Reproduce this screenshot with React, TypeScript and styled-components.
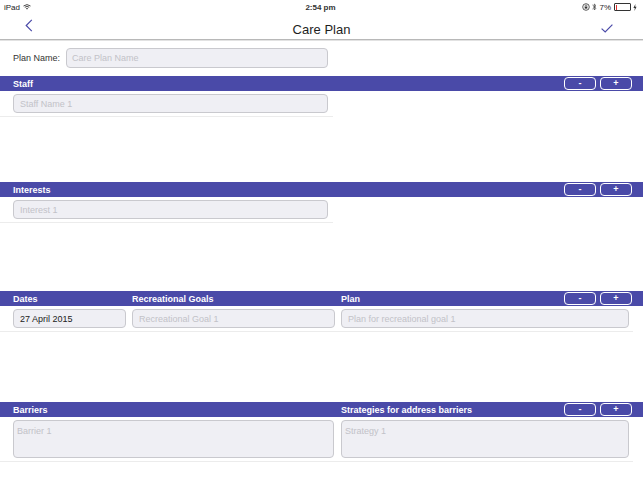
import React from 'react';
import styled, { createGlobalStyle } from 'styled-components';

const purple = '#4a4aa8';

const GlobalStyle = createGlobalStyle`
  html, body {
    margin: 0;
    padding: 0;
    background: #ffffff;
  }
  body {
    font-family: "Liberation Sans", Arial, sans-serif;
    color: #222;
  }
`;

type Column = { label: string; placeholder?: string; value?: string };

type SectionProps = {
  columns: Column[];
  template: string;
  gap: number;
  rowWidth: number;
  height: number;
  multiline?: boolean;
};

const Section = ({ columns, template, gap, rowWidth, height, multiline }: SectionProps) => {
  return (
    <SectionWrap $height={height}>
      <Header>
        <HeaderGrid $template={template} $gap={gap}>
          {columns.map((c) => (
            <HeaderLabel key={c.label}>{c.label}</HeaderLabel>
          ))}
        </HeaderGrid>
        <Buttons>
          <RoundButton>-</RoundButton>
          <RoundButton>+</RoundButton>
        </Buttons>
      </Header>
      <Row $template={template} $gap={gap} $width={rowWidth}>
        {columns.map((c) => (
          <Field key={c.label} $filled={!!c.value} $multiline={multiline}>
            {c.value ?? c.placeholder}
          </Field>
        ))}
      </Row>
    </SectionWrap>
  );
};

const App = () => {
  return (
    <>
      <GlobalStyle />
      <Page>
        <StatusBar>
          <StatusLeft>
            iPad
            <svg width="8" height="6" viewBox="0 0 8 6">
              <path d="M0.5 2 Q4 -0.8 7.5 2" stroke="#333" strokeWidth="0.9" fill="none" />
              <path d="M1.8 3.3 Q4 1.5 6.2 3.3" stroke="#333" strokeWidth="0.9" fill="none" />
              <path d="M4 5.6 L2.9 4.4 Q4 3.5 5.1 4.4 Z" fill="#333" />
            </svg>
          </StatusLeft>
          <Time>2:54 pm</Time>
          <StatusRight>
            <svg width="8" height="8" viewBox="0 0 8 8">
              <circle cx="4" cy="4" r="3.3" stroke="#333" strokeWidth="0.8" fill="none" />
              <rect x="2.7" y="3.6" width="2.6" height="2" fill="#333" />
              <path d="M3.1 3.6 V2.9 A0.9 0.9 0 0 1 4.9 2.9 V3.6" stroke="#333" strokeWidth="0.6" fill="none" />
            </svg>
            <svg width="5" height="8" viewBox="0 0 5 8">
              <path d="M0.5 2 L4 5.3 L2.3 7 V1 L4 2.7 L0.5 6" stroke="#333" strokeWidth="0.7" fill="none" />
            </svg>
            <span>7%</span>
            <Battery>
              <BatteryFill />
            </Battery>
            <svg width="4" height="7" viewBox="0 0 4 7">
              <path d="M2.4 0 L0.4 4 H1.8 L1.4 7 L3.6 2.8 H2.2 Z" fill="#333" />
            </svg>
          </StatusRight>
        </StatusBar>
        <NavBar>
          <NavButton>
            <svg width="8" height="13" viewBox="0 0 8 13">
              <path d="M6.8 0.8 L1.2 6.5 L6.8 12.2" stroke={purple} strokeWidth="1.2" fill="none" />
            </svg>
          </NavButton>
          <Title>Care Plan</Title>
          <NavButton $right>
            <svg width="12" height="9" viewBox="0 0 12 9">
              <path d="M0.6 4.6 L4.2 8 L11.4 0.6" stroke={purple} strokeWidth="1.2" fill="none" />
            </svg>
          </NavButton>
        </NavBar>
        <PlanRow>
          <PlanLabel>Plan Name:</PlanLabel>
          <PlanInput>Care Plan Name</PlanInput>
        </PlanRow>
        <Section
          columns={[{ label: 'Staff', placeholder: 'Staff Name 1' }]}
          template="315px"
          gap={0}
          rowWidth={333}
          height={106}
        />
        <Section
          columns={[{ label: 'Interests', placeholder: 'Interest 1' }]}
          template="315px"
          gap={0}
          rowWidth={333}
          height={109}
        />
        <Section
          columns={[
            { label: 'Dates', value: '27 April 2015' },
            { label: 'Recreational Goals', placeholder: 'Recreational Goal 1' },
            { label: 'Plan', placeholder: 'Plan for recreational goal 1' },
          ]}
          template="113px 203px 1fr"
          gap={6}
          rowWidth={633}
          height={111}
        />
        <Section
          columns={[
            { label: 'Barriers', placeholder: 'Barrier 1' },
            { label: 'Strategies for address barriers', placeholder: 'Strategy 1' },
          ]}
          template="321px 1fr"
          gap={7}
          rowWidth={633}
          height={80}
          multiline
        />
      </Page>
    </>
  );
};

const Page = styled.div`
  width: 643px;
  height: 482px;
  overflow: hidden;
  display: flex;
  flex-direction: column;
`;

const StatusBar = styled.div`
  height: 14px;
  display: grid;
  grid-template-columns: 1fr auto 1fr;
  align-items: center;
  padding: 0 6px 0 4px;
  font-size: 8px;
  color: #222;
`;

const StatusLeft = styled.div`
  display: flex;
  align-items: center;
  gap: 3px;
`;

const Time = styled.div`
  font-size: 8px;
  font-weight: bold;
  color: #333;
`;

const StatusRight = styled.div`
  display: flex;
  align-items: center;
  justify-content: flex-end;
  gap: 2px;
`;

const Battery = styled.div`
  width: 14px;
  height: 5px;
  border: 0.8px solid #333;
  border-radius: 1px;
  margin-left: 1px;
  display: flex;
  padding: 0.5px;
`;

const BatteryFill = styled.div`
  width: 1.5px;
  background: #e03030;
`;

const NavBar = styled.div`
  height: 25px;
  display: grid;
  grid-template-columns: 60px 1fr 60px;
  align-items: center;
  border-bottom: 1px solid #b8b8b8;
  box-shadow: 0 1px 0 #e2e2e2;
`;

const NavButton = styled.div<{ $right?: boolean }>`
  display: flex;
  justify-content: ${(p) => (p.$right ? 'flex-end' : 'flex-start')};
  padding: ${(p) => (p.$right ? '4px 30px 0 0' : '0 0 0 25px')};
  margin-top: ${(p) => (p.$right ? '0' : '-3px')};
`;

const Title = styled.div`
  text-align: center;
  font-size: 13px;
  color: #1e1e1e;
  padding-top: 5px;
`;

const PlanRow = styled.div`
  height: 36px;
  display: flex;
  align-items: center;
  padding: 0 0 0 13px;
  gap: 8px;
`;

const PlanLabel = styled.div`
  font-size: 9px;
  color: #333;
  white-space: nowrap;
  width: 45px;
`;

const PlanInput = styled.div`
  width: 250px;
  height: 18px;
  border: 1px solid #c9c9ce;
  border-radius: 4px;
  background: #efeff4;
  color: #c2c2c8;
  font-size: 9px;
  padding: 0 5px;
  display: flex;
  align-items: center;
`;

const SectionWrap = styled.div<{ $height: number }>`
  height: ${(p) => p.$height}px;
  flex-shrink: 0;
`;

const Header = styled.div`
  height: 15px;
  background: ${purple};
  display: flex;
  align-items: center;
  padding-left: 13px;
`;

const HeaderGrid = styled.div<{ $template: string; $gap: number }>`
  flex: 1;
  display: grid;
  grid-template-columns: ${(p) => p.$template};
  column-gap: ${(p) => p.$gap}px;
`;

const HeaderLabel = styled.div`
  color: #ffffff;
  font-size: 9px;
  font-weight: bold;
  white-space: nowrap;
`;

const Buttons = styled.div`
  display: flex;
  gap: 4px;
  margin-right: 11px;
`;

const RoundButton = styled.div`
  width: 30px;
  height: 11px;
  border: 1px solid #ffffff;
  border-radius: 4px;
  color: #ffffff;
  font-size: 9px;
  font-weight: bold;
  display: flex;
  align-items: center;
  justify-content: center;
  line-height: 1;
`;

const Row = styled.div<{ $template: string; $gap: number; $width: number }>`
  width: ${(p) => p.$width}px;
  box-sizing: border-box;
  display: grid;
  grid-template-columns: ${(p) => p.$template};
  column-gap: ${(p) => p.$gap}px;
  padding: 3px 4px 3px 13px;
  border-bottom: 1px solid #ececec;
`;

const Field = styled.div<{ $filled: boolean; $multiline?: boolean }>`
  box-sizing: border-box;
  height: ${(p) => (p.$multiline ? 38 : 19)}px;
  border: 1px solid #c9c9ce;
  border-radius: 4px;
  background: #efeff4;
  color: ${(p) => (p.$filled ? '#222' : '#c2c2c8')};
  font-size: 9px;
  padding: ${(p) => (p.$multiline ? '5px 3px' : '0 6px')};
  display: flex;
  align-items: ${(p) => (p.$multiline ? 'flex-start' : 'center')};
  white-space: nowrap;
`;

export default App;
